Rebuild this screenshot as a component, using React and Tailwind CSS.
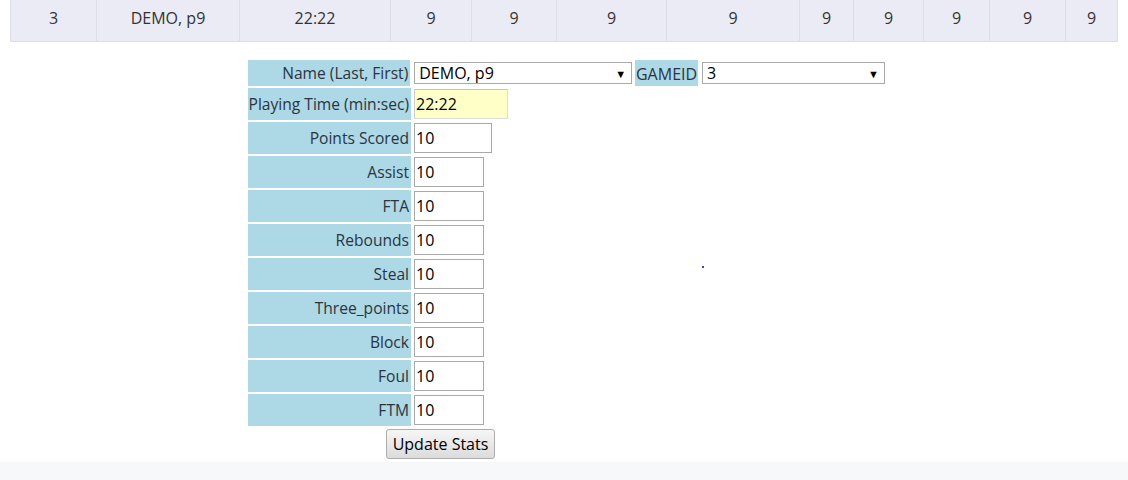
const topCols = [
  { w: "w-[86px]", v: "3" },
  { w: "w-[143px]", v: "DEMO, p9" },
  { w: "w-[151px]", v: "22:22" },
  { w: "w-[81px]", v: "9" },
  { w: "w-[85px]", v: "9" },
  { w: "w-[110px]", v: "9" },
  { w: "w-[133px]", v: "9" },
  { w: "w-[54px]", v: "9" },
  { w: "w-[70px]", v: "9" },
  { w: "w-[66px]", v: "9" },
  { w: "w-[76px]", v: "9" },
  { w: "flex-1", v: "9" },
];

const stats = [
  { label: "Points Scored", w: "w-[78px]" },
  { label: "Assist", w: "w-[70px]" },
  { label: "FTA", w: "w-[70px]" },
  { label: "Rebounds", w: "w-[70px]" },
  { label: "Steal", w: "w-[70px]" },
  { label: "Three_points", w: "w-[70px]" },
  { label: "Block", w: "w-[70px]" },
  { label: "Foul", w: "w-[70px]" },
  { label: "FTM", w: "w-[70px]" },
];

function FakeSelect({ value, width }) {
  return (
    <div
      className={`relative flex h-[22px] items-center border border-[#a9a9a9] bg-white pl-[4px] text-[16px] text-black ${width}`}
    >
      <span>{value}</span>
      <span className="absolute right-[5px] top-[5px] text-[11px] leading-none text-black">▼</span>
    </div>
  );
}

export default function App() {
  return (
    <div className="relative min-h-[480px] bg-white font-['Open_Sans',sans-serif] text-[#333]">
      {/* stats row */}
      <div className="mx-[10px] flex h-[42px] border-b border-l border-r border-[#dcdde6] bg-[#ebebf5] text-[16px]">
        {topCols.map((c, i) => (
          <div
            key={i}
            className={`flex items-center justify-center pb-[6px] ${c.w} ${i < topCols.length - 1 ? "border-r border-[#dcdde6]" : ""}`}
          >
            {c.v}
          </div>
        ))}
      </div>

      {/* edit form */}
      <div className="mx-auto w-[642px] pl-[5px] pt-[18px] text-[15.6px]">
        <div className="flex flex-col gap-[2px] whitespace-nowrap">
          <div className="flex gap-[2px]">
            <div className="flex h-[26px] w-[163px] items-center justify-end bg-[#add8e6] pr-[2px] pt-[1px] text-[#2b3440]">
              Name (Last, First)
            </div>
            <div className="flex w-[222px] items-center pl-[2px]">
              <FakeSelect value="DEMO, p9" width="w-[218px]" />
            </div>
            <div className="flex h-[26px] w-[63px] items-center justify-center bg-[#add8e6] pt-[1px] text-[16px] text-[#2b3440]">
              GAMEID
            </div>
            <div className="flex w-[186px] items-center pl-[2px]">
              <FakeSelect value="3" width="w-[183px]" />
            </div>
          </div>

          <div className="flex gap-[2px]">
            <div className="flex h-[32px] w-[163px] items-center justify-end bg-[#add8e6] pr-[2px] pt-[1px] text-[#2b3440]">
              Playing Time (min:sec)
            </div>
            <div className="flex items-center pl-[1px]">
              <div className="flex h-[30px] w-[94px] items-center border border-[#dcdcdc] border-t-[#c4c4c4] border-l-[#cfcfcf] bg-[#ffffc8] pl-[1px] text-[16px] text-black">
                22:22
              </div>
            </div>
          </div>

          {stats.map((s) => (
            <div key={s.label} className="flex gap-[2px]">
              <div className="flex h-[32px] w-[163px] items-center justify-end bg-[#add8e6] pr-[2px] pt-[1px] text-[#2b3440]">
                {s.label}
              </div>
              <div className="flex items-center pl-[1px]">
                <div className={`flex h-[30px] items-center border border-[#a9a9a9] bg-white pl-[1px] text-[16px] text-black ${s.w}`}>
                  10
                </div>
              </div>
            </div>
          ))}

          <div className="flex w-[385px] justify-center pt-[1px]">
            <button className="h-[30px] w-[109px] rounded-[3px] border border-[#adadad] bg-gradient-to-b from-[#f6f6f6] to-[#dcdcdc] text-[16px] text-black">
              Update Stats
            </button>
          </div>
        </div>
      </div>

      <div className="absolute left-[702px] top-[266px] h-[2px] w-[2px] bg-[#3b3bff]" />

      <div className="mt-[3px] h-[18px] bg-[#f7f8fa]" />
    </div>
  );
}
